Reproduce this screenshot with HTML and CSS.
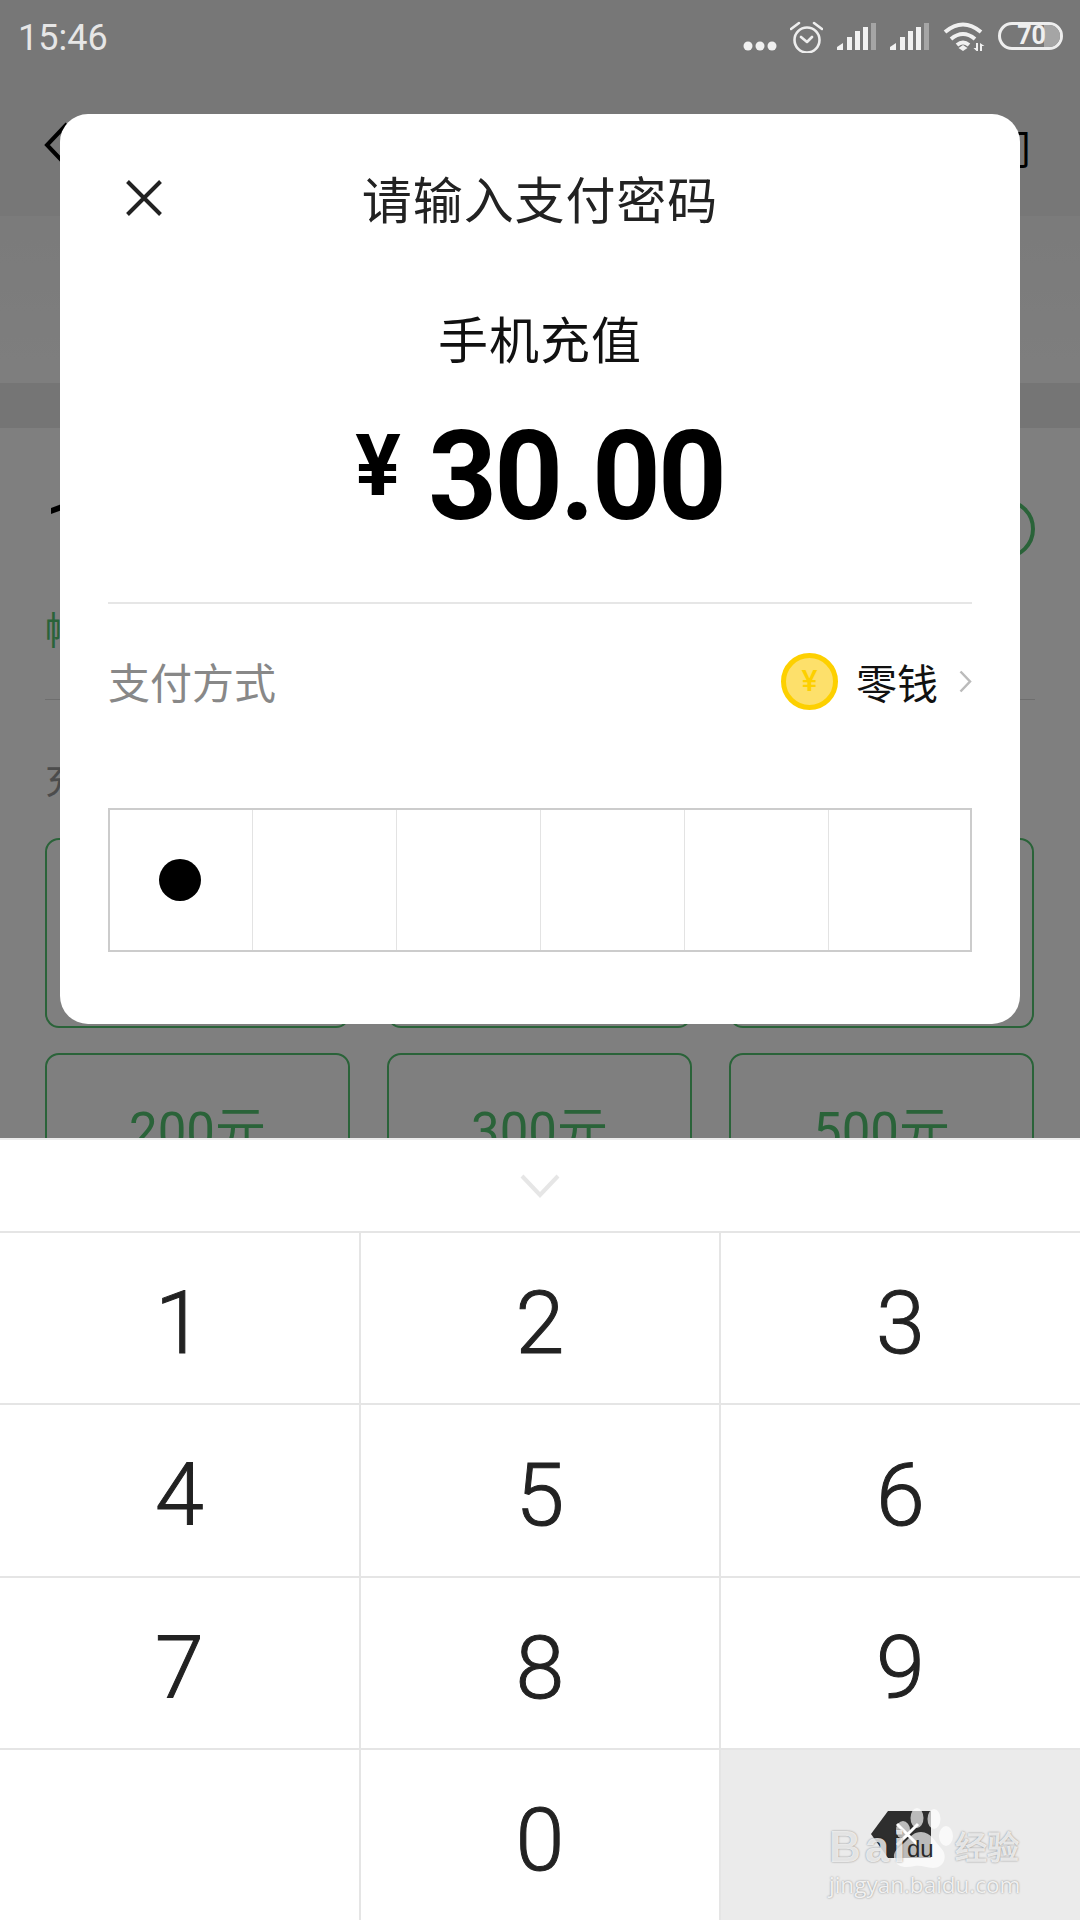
FILE: index.html
```html
<!DOCTYPE html>
<html lang="zh-CN">
<head>
<meta charset="utf-8">
<title>手机充值</title>
<link rel="stylesheet" href="styles.css">
</head>
<body>
<div class="page">
  <div class="status">
    <span class="time">15:46</span>
    <div class="status-icons">
      <svg class="i-dots" width="34" height="12" viewBox="0 0 34 12"><circle cx="5" cy="6" r="4.500"/><circle cx="17" cy="6" r="4.500"/><circle cx="29" cy="6" r="4.500"/></svg>
      <svg class="i-alarm" width="33" height="32" viewBox="0 0 33 32"><circle cx="17" cy="19" r="12.500"/><path d="M11 16l6 5 5-5M1 8l8-6M24 2l8 6"/></svg>
      <svg class="i-signal" width="39" height="27" viewBox="0 0 39 27"><path class="on" d="M0 27v-3l6-4v7zM10 27V14h5v13zM18 27V8h5v19zM26 27V4h5v23z"/><path class="off" d="M34 27V0h5v27z"/></svg>
      <svg class="i-signal" width="39" height="27" viewBox="0 0 39 27"><path class="on" d="M0 27v-3l6-4v7zM10 27V14h5v13zM18 27V8h5v19zM26 27V4h5v23z"/><path class="off" d="M34 27V0h5v27z"/></svg>
      <svg class="i-wifi" width="42" height="30" viewBox="0 0 42 30"><path class="arc" d="M2 11Q20-4 38 11M8 18Q20 8 32 18M14 24Q20 19 26 24"/><path class="solid" d="M15.500 27l4.500-3 4.500 3-4.500 3zM33 22h2v8h-1.500l-3-3h2.500zM37 22v8h2v-5h2.500z"/></svg>
      <div class="battery"><span class="battery-num">70</span></div>
    </div>
  </div>
  <div class="nav">
    <svg class="back" width="28" height="48" viewBox="0 0 28 48"><path d="M24 3L4 24l20 21"/></svg>
    <span class="nav-link">门</span>
  </div>
  <div class="info"></div>
  <div class="band"></div>
  <div class="account">
    <div class="phone-row">
      <span class="phone">138</span>
      <svg class="contact" width="60" height="60" viewBox="0 0 60 60"><circle cx="30" cy="30" r="28"/></svg>
    </div>
    <div class="tip">帐户余额</div>
    <div class="rule"></div>
    <div class="section-title">充值金额</div>
    <div class="cards">
      <div class="card">30元</div>
      <div class="card">50元</div>
      <div class="card">100元</div>
      <div class="card">200元</div>
      <div class="card">300元</div>
      <div class="card">500元</div>
    </div>
  </div>
</div>

<div class="scrim"></div>

<div class="modal">
  <div class="modal-head">
    <svg class="close" width="36" height="36" viewBox="0 0 36 36"><path d="M1.500 1.500l33 33M34.500 1.500l-33 33"/></svg>
    <span class="modal-title">请输入支付密码</span>
    <span></span>
  </div>
  <div class="subject">手机充值</div>
  <div class="amount"><span class="yen">¥</span><span class="sum">30.00</span></div>
  <div class="modal-rule"></div>
  <div class="pay-row">
    <span class="pay-label">支付方式</span>
    <div class="pay-method">
      <span class="coin">¥</span>
      <span class="pay-name">零钱</span>
      <svg class="pay-arrow" width="13" height="23" viewBox="0 0 13 23"><path d="M1.500 1.500L11 11.500l-9.500 10"/></svg>
    </div>
  </div>
  <div class="pin">
    <div class="pin-cell"><span class="pin-dot"></span></div>
    <div class="pin-cell"></div>
    <div class="pin-cell"></div>
    <div class="pin-cell"></div>
    <div class="pin-cell"></div>
    <div class="pin-cell"></div>
  </div>
</div>

<div class="keyboard">
  <div class="kb-top">
    <svg class="kb-hide" width="40" height="24" viewBox="0 0 40 24"><path d="M2 2l18 19L38 2"/></svg>
  </div>
  <div class="keys">
    <div class="key">1</div><div class="key">2</div><div class="key">3</div>
    <div class="key">4</div><div class="key">5</div><div class="key">6</div>
    <div class="key">7</div><div class="key">8</div><div class="key">9</div>
    <div class="key"></div><div class="key">0</div>
    <div class="key key-del">
      <svg class="del" width="60" height="47" viewBox="0 0 60 47"><path class="del-body" d="M17 0H60V47H17L0 23z"/><path class="del-x" d="M26 13l21 21M47 13L26 34"/></svg>
      <div class="watermark">
        <svg class="paw" width="360" height="172" viewBox="0 0 360 172"><ellipse cx="182" cy="80" rx="7" ry="9"/><ellipse cx="196" cy="68" rx="6.500" ry="10"/><ellipse cx="213" cy="69" rx="6.500" ry="10"/><ellipse cx="225" cy="86" rx="7" ry="10"/><path d="M200 82c10 0 14 10 20 16 7 7 4 20-8 20-7 0-12-3-18-2-9 2-19 2-21-8-1-8 6-11 12-17 5-5 8-9 15-9z"/></svg>
        <span class="wm-bai">Bai</span>
        <span class="wm-du">du</span>
        <span class="wm-cn">经验</span>
        <span class="wm-url">jingyan.baidu.com</span>
      </div>
    </div>
  </div>
</div>
</body>
</html>
```
FILE: styles.css
```css
* { box-sizing: border-box; }
html, body { margin: 0; padding: 0; }
body {
  width: 1080px;
  height: 1920px;
  overflow: hidden;
  position: relative;
  background: #fff;
  font-family: "Noto Sans CJK SC", Roboto, sans-serif;
}
.page { display: flex; flex-direction: column; height: 1920px; }

/* status bar */
.status {
  height: 70px;
  padding: 0 17px 0 18px;
  display: flex;
  align-items: flex-start;
  justify-content: space-between;
  background: #eee;
}
.time {
  position: relative;
  z-index: 3;
  font: 400 36px/37px Roboto, sans-serif;
  color: #e6e6e6;
  margin-top: 20px;
}
.status-icons {
  position: relative;
  z-index: 3;
  display: flex;
  align-items: flex-end;
  height: 51px;
  gap: 14px;
}
.i-dots { fill: #f0f0f0; margin-bottom: -1px; margin-right: -1px; }
.i-alarm { fill: none; stroke: #eee; stroke-width: 2.600; stroke-linecap: round; stroke-linejoin: round; margin-bottom: -2px; }
.i-signal { margin-bottom: 1px; }
.i-signal .on { fill: #f2f2f2; }
.i-signal .off { fill: #a5a5a5; }
.i-wifi { margin-right: -1px; }
.arc { fill: none; stroke: #f0f0f0; stroke-width: 4; }
.solid { fill: #f0f0f0; }
.battery {
  position: relative;
  width: 65px;
  height: 28px;
  margin-bottom: 1px;
  border: 3px solid #eee;
  border-radius: 14px;
  overflow: hidden;
  display: flex;
  align-items: center;
  justify-content: center;
}
.battery::after {
  content: "";
  position: absolute;
  right: 0;
  top: 0;
  bottom: 0;
  width: 16px;
  background: #a5a5a5;
}
.battery-num {
  position: relative;
  z-index: 1;
  margin-left: 2px;
  font: 700 25px/22px Roboto, sans-serif;
  color: #efefef;
}

/* nav */
.nav {
  height: 146px;
  background: #eee;
  padding: 4px 49px 0 43px;
  display: flex;
  align-items: center;
  justify-content: space-between;
}
.back { fill: none; stroke: #000; stroke-width: 4; }
.nav-link { font-size: 40px; line-height: 40px; color: #000; margin-top: 4px; }

.info { height: 167px; background: linear-gradient(#f6f6f6, #fdfdfd); }
.band { height: 45px; background: #ebebeb; }

/* account */
.account { flex: 1; background: #fff; padding: 71px 45px 0 45px; }
.phone-row { display: flex; align-items: center; justify-content: space-between; height: 60px; }
.phone { font: 400 72px/60px Roboto, sans-serif; color: #000; }
.contact { fill: none; stroke: #54c672; stroke-width: 4; }
.tip { margin-top: 49px; font-size: 38px; line-height: 40px; color: #54c672; }
.rule { margin-top: 51px; height: 1px; background: #dcdcdc; }
.section-title { margin-top: 55px; font-size: 38px; line-height: 44px; color: #999; }
.cards {
  margin-top: 39px;
  display: grid;
  grid-template-columns: repeat(3, 305px);
  column-gap: 37px;
  row-gap: 25px;
}
.card {
  height: 190px;
  padding-top: 47px;
  border: 2px solid #54c672;
  border-radius: 14px;
  text-align: center;
  font-size: 51px;
  line-height: 60px;
  color: #54c672;
  font-family: Roboto, "Noto Sans CJK SC", sans-serif;
}

.scrim { position: absolute; inset: 0; background: rgba(0, 0, 0, .5); z-index: 1; }

/* modal */
.modal {
  position: absolute;
  z-index: 2;
  left: 60px;
  top: 114px;
  width: 960px;
  height: 910px;
  padding: 0 48px;
  background: #fff;
  border-radius: 28px;
  display: flow-root;
}
.modal-head {
  margin-top: 53px;
  height: 60px;
  display: grid;
  grid-template-columns: 1fr auto 1fr;
  align-items: center;
}
.close { margin-left: 18px; margin-top: 2px; fill: none; stroke: #222; stroke-width: 4; }
.modal-title { font-size: 50px; line-height: 60px; color: #222; letter-spacing: .9px; }
.subject { margin-top: 80px; text-align: center; font-size: 50px; line-height: 60px; color: #111; letter-spacing: 1px; }
.amount {
  margin-top: 55px;
  height: 110px;
  padding-left: 5px;
  display: flex;
  align-items: center;
  justify-content: center;
  gap: 21px;
  color: #000;
  font-family: Roboto, sans-serif;
  font-weight: 700;
}
.yen { font-size: 85px; line-height: 90px; margin-bottom: 22px; }
.sum { display: inline-block; transform: scaleX(.96); font-size: 125px; line-height: 110px; letter-spacing: -3px; }
.modal-rule { margin-top: 70px; height: 2px; background: #e6e6e6; }
.pay-row { margin-top: 47px; height: 60px; display: flex; align-items: center; justify-content: space-between; }
.pay-label { font-size: 42px; line-height: 60px; color: #888; }
.pay-method { display: flex; align-items: center; }
.coin {
  width: 57px;
  height: 57px;
  border-radius: 50%;
  border: 5px solid #fdd000;
  background: #fde06b;
  color: #fdd000;
  display: flex;
  align-items: center;
  justify-content: center;
  font: 500 30px/1 Roboto, sans-serif;
}
.pay-name { margin-left: 18px; font-size: 41px; line-height: 60px; color: #111; }
.pay-arrow { margin-left: 21px; fill: none; stroke: #bbb; stroke-width: 2.500; }
.pin {
  margin-top: 97px;
  height: 144px;
  border: 2px solid #ccc;
  display: grid;
  grid-template-columns: 142px repeat(4, 144px) 1fr;
}
.pin-cell { display: flex; align-items: center; justify-content: center; border-left: 1px solid #e3e3e3; }
.pin-cell:first-child { border-left: 0; }
.pin-dot { width: 42px; height: 42px; border-radius: 50%; background: #000; margin-left: -2px; }

/* keyboard */
.keyboard {
  position: absolute;
  z-index: 2;
  left: 0;
  right: 0;
  bottom: 0;
  height: 782px;
  background: #fff;
  border-top: 2px solid #ececec;
  display: flex;
  flex-direction: column;
}
.kb-top { height: 91px; display: flex; align-items: center; justify-content: center; }
.kb-hide { fill: none; stroke: #e6e6e6; stroke-width: 4; }
.keys { flex: 1; display: grid; grid-template-columns: 359px 360px 361px; grid-auto-rows: 1fr; }
.key {
  display: flex;
  align-items: center;
  justify-content: center;
  padding-top: 10px;
  border-top: 2px solid #e5e5e5;
  border-left: 2px solid #e5e5e5;
  font: 300 88px/1 Roboto, sans-serif;
  -webkit-text-stroke: 1px #222;
  color: #222;
}
.key:nth-child(3n+1) { border-left: 0; }
.key-del { position: relative; background: #ebebeb; padding-top: 0; -webkit-text-stroke: 0; }
.del-body { fill: #2e2e2e; }
.del-x { fill: none; stroke: #fff; stroke-width: 3; }
.watermark { position: absolute; inset: 0; }
.paw { position: absolute; left: 0; top: 0; fill: rgba(255, 255, 255, .68); }
.wm-bai, .wm-cn, .wm-url, .wm-du { position: absolute; white-space: nowrap; }
.wm-bai {
  left: 108px;
  top: 72px;
  font: 700 44px/50px "Liberation Sans", sans-serif;
  letter-spacing: 4px;
  color: rgba(255, 255, 255, .8);
  text-shadow: 0 0 2px rgba(0, 0, 0, .45);
}
.wm-du { left: 186px; top: 84px; font: 400 24px/30px "Liberation Sans", sans-serif; color: #2a2a2a; }
.wm-cn {
  left: 234px;
  top: 78px;
  font-size: 32px;
  line-height: 40px;
  font-weight: 700;
  color: rgba(255, 255, 255, .8);
  text-shadow: 0 0 2px rgba(0, 0, 0, .45);
}
.wm-url {
  left: 108px;
  top: 120px;
  font: 400 22.500px/30px "Open Sans", sans-serif;
  color: rgba(255, 255, 255, .85);
  text-shadow: 0 0 2px rgba(0, 0, 0, .45);
}
```
